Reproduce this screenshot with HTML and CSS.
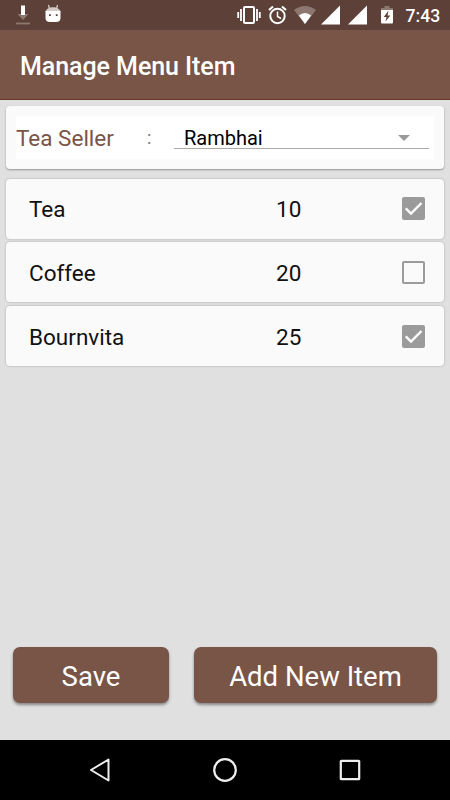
FILE: index.html
```html
<!DOCTYPE html>
<html lang="en">
<head>
  <meta charset="UTF-8" />
  <meta name="viewport" content="width=device-width, initial-scale=1.0" />
  <title>Manage Menu Item</title>
  <link rel="stylesheet" href="styles.css">
</head>
<body>
  <div class="status-bar">
    <svg class="download" width="16" height="22" viewBox="0 0 16 22">
      <path d="M2.500 10h11L8 16z" fill="#8d7871"/>
      <path d="M6 1.500h4V11H6z" fill="#fff"/>
      <path d="M1 19.500h14" stroke="#8d7871" stroke-width="1.800"/>
    </svg>
    <svg class="robot" width="16" height="20" viewBox="0 0 16 20">
      <path d="M3.500 1l1 4M12.500 1l-1 4" stroke="#e6dfdc" stroke-width="1.100"/>
      <path d="M.500 8C1 1.500 15 1.500 15.500 8z" fill="#d3c9c6"/>
      <path d="M.500 7h15v7q0 4-4.500 4H5q-4.500 0-4.500-4z" fill="#fff"/>
      <path d="M4 10.200h1.800V12H4zM10.800 10.200h1.800V12h-1.800z" fill="#5d4037"/>
    </svg>
    <div class="status-icons">
      <svg width="24" height="20" viewBox="0 0 24 20">
        <rect x="7" y="2" width="10" height="16" rx="1" fill="none" stroke="#fff" stroke-width="2"/>
        <path d="M4 4v12M20 4v12M1.200 7v6M22.800 7v6" stroke="#fff" stroke-width="1.800"/>
      </svg>
      <svg class="alarm" width="19" height="20" viewBox="0 0 19 20">
        <circle cx="9.500" cy="11" r="7.200" fill="none" stroke="#fff" stroke-width="2"/>
        <path d="M1 5l4-3.500M18 5l-4-3.500" stroke="#fff" stroke-width="2"/>
        <path d="M9.500 6.500v5l3.500 2" fill="none" stroke="#fff" stroke-width="1.500"/>
      </svg>
      <svg class="wifi" width="22" height="20" viewBox="0 0 22 20">
        <path d="M0 5Q11-3 22 5L11 19z" fill="#8d7871"/>
        <path d="M4.800 10.500Q11 5.500 17.200 10.500L11 19z" fill="#fff"/>
      </svg>
      <svg class="signal" width="19" height="20" viewBox="0 0 19 20">
        <path d="M0 19.500L19 .5v19z" fill="#fff"/>
      </svg>
      <svg class="signal second" width="19" height="20" viewBox="0 0 19 20">
        <path d="M0 19.500L19 .5v19z" fill="#fff"/>
      </svg>
      <svg class="battery" width="12" height="20" viewBox="0 0 12 20">
        <path d="M3.500 1h5v2H12v3H0V3h3.500z" fill="#8d7871"/>
        <path d="M0 5h12v12.500q0 1-1 1H1q-1 0-1-1z" fill="#fff"/>
        <path d="M7.500 5.500L2.800 12H5.500L4.500 16.500 9.300 10.500H6.500z" fill="#5d4037"/>
      </svg>
      <span class="clock">7:43</span>
    </div>
  </div>

  <header class="app-bar">
    <h1>Manage Menu Item</h1>
  </header>

  <main class="content">
    <section class="card seller-card">
      <div class="seller">
        <span class="seller-label">Tea Seller</span>
        <span class="colon">:</span>
        <div class="spinner">
          <span>Rambhai</span>
          <svg width="12" height="6" viewBox="0 0 12 6"><path d="M0 0h12L6 6z" fill="#9b9b9b"/></svg>
        </div>
      </div>
    </section>

    <div class="items">
      <div class="card item">
        <span class="name">Tea</span>
        <span class="price">10</span>
        <span class="check checked">
          <svg width="23" height="23" viewBox="0 0 23 23"><path d="M3.700 11.300L9 16.500 19.500 6" fill="none" stroke="#fff" stroke-width="2.400"/></svg>
        </span>
      </div>
      <div class="card item">
        <span class="name">Coffee</span>
        <span class="price">20</span>
        <span class="check"></span>
      </div>
      <div class="card item">
        <span class="name">Bournvita</span>
        <span class="price">25</span>
        <span class="check checked">
          <svg width="23" height="23" viewBox="0 0 23 23"><path d="M3.700 11.300L9 16.500 19.500 6" fill="none" stroke="#fff" stroke-width="2.400"/></svg>
        </span>
      </div>
    </div>

    <div class="actions">
      <button class="btn save">Save</button>
      <button class="btn add">Add New Item</button>
    </div>
  </main>

  <nav class="nav-bar">
    <svg width="24" height="26" viewBox="0 0 24 26"><path d="M20.500 2.500v21L3 13z" fill="none" stroke="#eee" stroke-width="2" stroke-linejoin="round"/></svg>
    <svg width="26" height="26" viewBox="0 0 26 26"><circle cx="13" cy="13" r="10.800" fill="none" stroke="#eee" stroke-width="2.200"/></svg>
    <svg width="24" height="26" viewBox="0 0 24 26"><rect x="2.800" y="3.800" width="18.400" height="18.400" rx=".5" fill="none" stroke="#eee" stroke-width="2.200"/></svg>
  </nav>
</body>
</html>
```
FILE: styles.css
```css
:root {
  --primary: #795548;
  --primary-dark: #5d4037;
  --bg: #e0e0e0;
  --card-bg: #fafafa;
  --grey: #9b9b9b;
}

* {
  box-sizing: border-box;
}

body {
  margin: 0;
  height: 800px;
  display: flex;
  flex-direction: column;
  overflow: hidden;
  background: var(--bg);
  font-family: Roboto, sans-serif;
  color: #111;
}

svg {
  display: block;
  flex: none;
}

/* Status bar */
.status-bar {
  height: 30px;
  flex: none;
  display: flex;
  align-items: flex-start;
  padding: 4px 10.5px 0 15px;
  background: var(--primary-dark);
}

.robot {
  margin-left: 13.5px;
}

.status-icons {
  display: flex;
  align-items: flex-start;
  margin-left: auto;
  padding-top: 1px;
}

.alarm { margin-left: 7px; }
.wifi { margin-left: 7.5px; }
.signal { margin-left: 5px; }
.second { margin-left: 8px; }
.battery { margin-left: 14px; }

.clock {
  width: 34px;
  margin-left: 12.5px;
  font-size: 17.6px;
  font-weight: 500;
  line-height: 22px;
  color: #fff;
  white-space: nowrap;
}

.app-bar {
  height: 70px;
  flex: none;
  display: flex;
  align-items: center;
  padding: 3px 20px 0;
  background: var(--primary);
  border-bottom: 1px solid #6b3626;
}

.app-bar h1 {
  margin: 0;
  font-size: 25px;
  font-weight: 500;
  letter-spacing: -0.06px;
  color: #fff;
  white-space: nowrap;
}

.content {
  flex: 1;
  display: flex;
  flex-direction: column;
  padding: 6px 6px 37px;
}

.card {
  background: var(--card-bg);
  border-radius: 4px;
  box-shadow: 0 1px 2px rgba(0, 0, 0, 0.35);
}

/* Seller */
.seller-card {
  height: 63px;
  padding: 10px;
}

.seller {
  height: 43px;
  display: flex;
  align-items: center;
  background: #fff;
}

.seller-label {
  width: 131px;
  font-size: 22.5px;
  color: var(--primary);
}

.colon {
  width: 27px;
  font-size: 18px;
  color: #777;
}

.spinner {
  width: 255px;
  height: 23px;
  display: flex;
  align-items: center;
  justify-content: space-between;
  padding: 1px 19px 0 10px;
  border-bottom: 1px solid #aaa;
  font-size: 20px;
  color: #000;
}

/* Menu items */
.items {
  display: flex;
  flex-direction: column;
  gap: 3.7px;
  margin-top: 9.8px;
}

.item {
  height: 60px;
  display: flex;
  align-items: center;
  padding: 1px 19px 0 23px;
  font-size: 22.5px;
  box-shadow: 0 0 2px rgba(0, 0, 0, 0.3);
}

.price {
  margin-left: auto;
  width: 126px;
}

.check {
  width: 23px;
  height: 23px;
  margin-top: -1px;
  border: 2px solid var(--grey);
  border-radius: 2px;
}

.checked {
  border: none;
  background: var(--grey);
}

/* Buttons */
.actions {
  display: flex;
  justify-content: space-between;
  margin-top: auto;
  padding: 0 7px;
}

.btn {
  height: 56px;
  padding: 2px 0 0;
  border: none;
  border-radius: 7px;
  background: var(--primary);
  color: #fff;
  font-family: inherit;
  font-size: 27.5px;
  box-shadow: 0 2px 3px rgba(0, 0, 0, 0.4);
}

.save { width: 156px; }
.add { width: 243px; }

.nav-bar {
  height: 60px;
  flex: none;
  display: flex;
  align-items: center;
  justify-content: space-between;
  padding: 0 88px;
  background: #000;
}
```
